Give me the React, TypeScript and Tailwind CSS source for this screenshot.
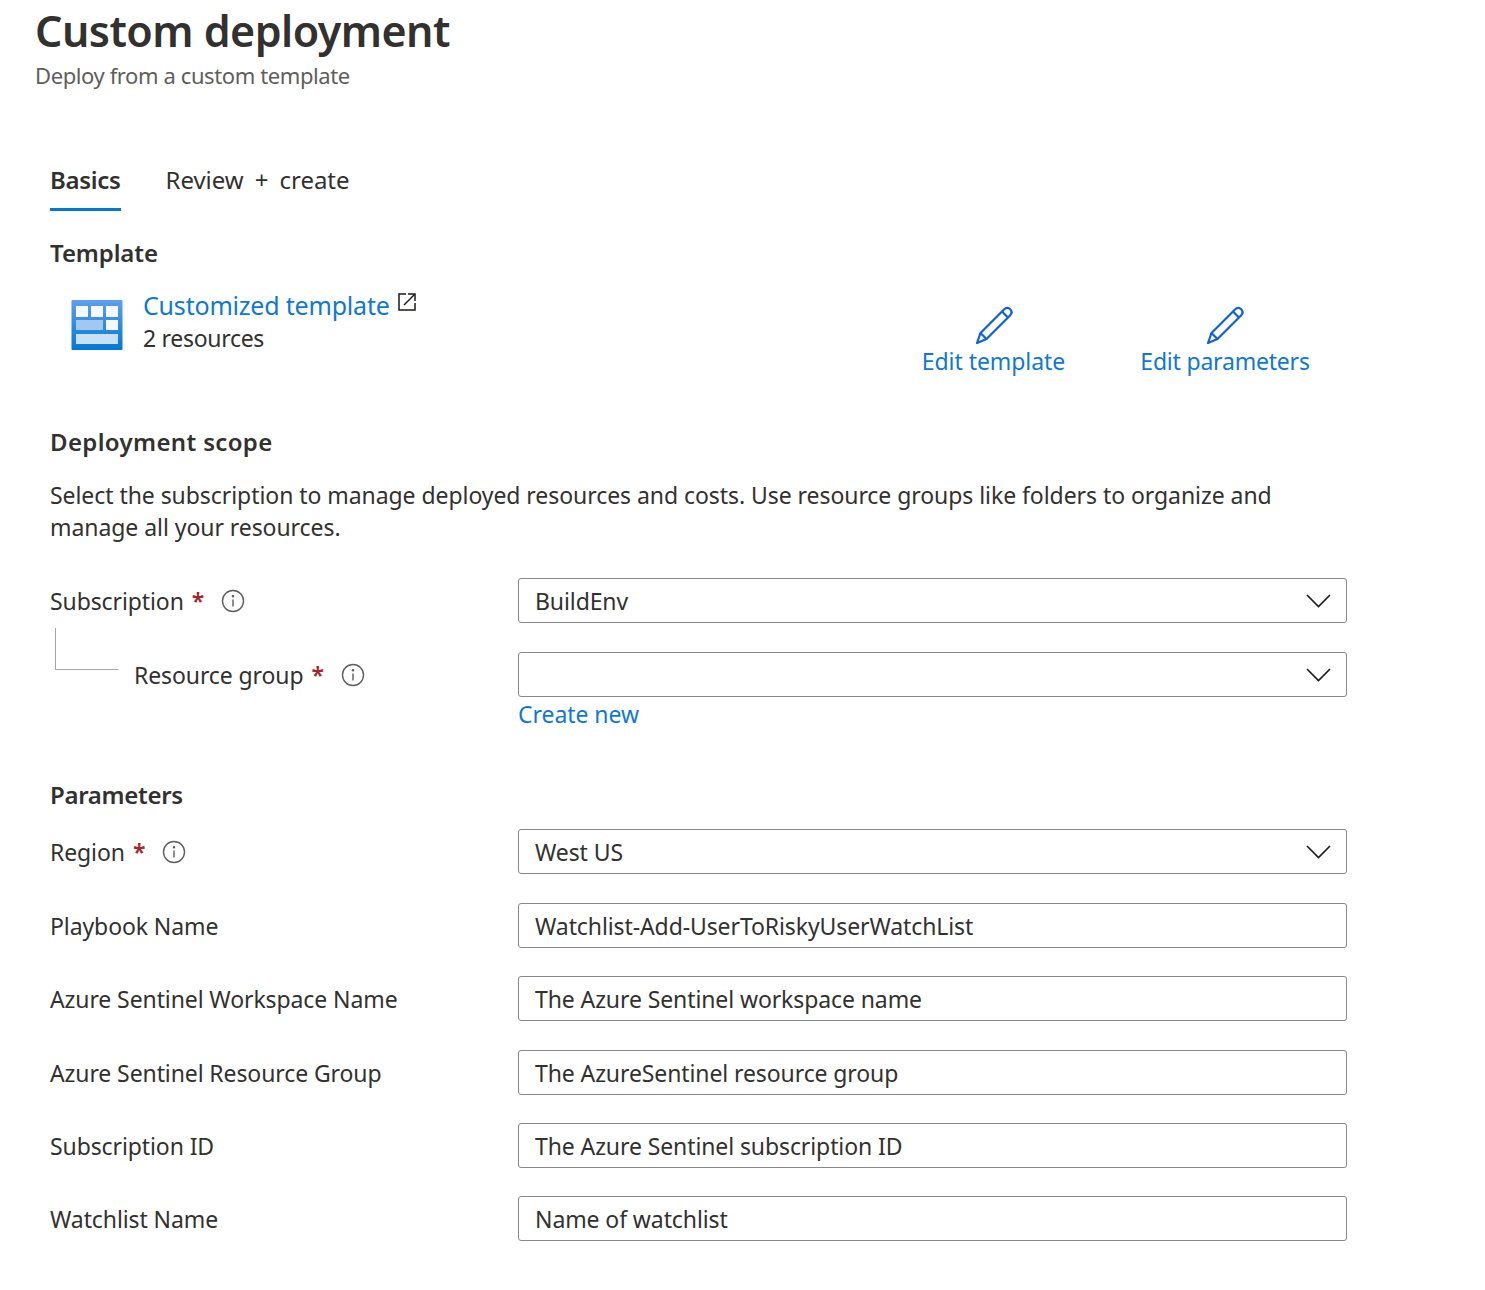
import React from 'react';

const InfoIcon = () => (
    <svg width="24" height="24" viewBox="0 0 24 24" fill="none" stroke="#605e5c" strokeWidth="1.4">
        <circle cx="12" cy="12" r="10.5" />
        <path d="M12 10.5v7" />
        <circle cx="12" cy="7.2" r="0.6" fill="#605e5c" />
    </svg>
);

const PencilIcon = () => (
    <svg width="38" height="38" viewBox="0 0 38 38" fill="none" stroke="#0f62d6" strokeWidth="2.2" strokeLinejoin="round">
        <path d="M2 37 L5.5 27 L29 3.5 C31 1.5 33.5 1.5 35.2 3.2 C37 5 37 7.5 35 9.5 L11.5 33 Z" />
        <path d="M5.5 27 L11.5 33" />
        <path d="M27 5.5 L33 11.5" />
    </svg>
);

const TemplateIcon = () => (
    <svg width="52" height="50" viewBox="0 0 52 50">
        <defs>
            <linearGradient id="tpl" x1="0" y1="0" x2="0" y2="1">
                <stop offset="0" stopColor="#5ea0ef" />
                <stop offset="1" stopColor="#0078d4" />
            </linearGradient>
        </defs>
        <rect x="0.5" y="0" width="51" height="50" rx="1" fill="url(#tpl)" />
        <rect x="5" y="6" width="12" height="11" fill="#f5f9ff" />
        <rect x="20" y="6" width="12" height="11" fill="#f5f9ff" />
        <rect x="35" y="6" width="12" height="11" fill="#f5f9ff" />
        <rect x="5" y="20" width="27" height="10" fill="#a3c8f0" />
        <rect x="35" y="20" width="12" height="10" fill="#f5f9ff" />
        <rect x="5" y="34" width="42" height="10" fill="#c6e0f6" />
    </svg>
);

const ExternalIcon = () => (
    <svg width="18" height="18" viewBox="0 0 18 18" fill="none" stroke="#1b1a19" strokeWidth="1.5">
        <path d="M8 1H1v16h16v-7" />
        <path d="M6 12 L16.5 1.5" />
        <path d="M10 1h7v7" />
    </svg>
);

const Chevron = () => (
    <svg width="25" height="14" viewBox="0 0 25 14" fill="none" stroke="#1b1a19" strokeWidth="1.6">
        <path d="M1 1 L12.5 12.5 L24 1" />
    </svg>
);

const Required = () => <span className="ml-2 text-[#a4262c] font-semibold">*</span>;

const Box = ({ value, select }: { value?: string; select?: boolean }) => (
    <div className="w-[829px] h-[45px] flex items-center justify-between pl-[16px] pr-[15px] border border-[#8a8886] rounded-[3px] text-[#323130]">
        <span className="tracking-[-0.1px]">{value}</span>
        {select && <Chevron />}
    </div>
);

const Row = ({ label, value, select, required, info, mt }: {
    label: string;
    value?: string;
    select?: boolean;
    required?: boolean;
    info?: boolean;
    mt: string;
}) => (
    <div className={`flex items-center ${mt}`}>
        <div className="w-[468px] flex items-center text-[#323130] tracking-[-0.1px]">
            {label}
            {required && <Required />}
            {info && <span className="ml-[17px] flex"><InfoIcon /></span>}
        </div>
        <Box value={value} select={select} />
    </div>
);

const App = () => {
    return (
        <div className='font-["Noto_Sans",sans-serif] w-[1485px] h-[1290px] bg-white overflow-hidden text-[23px] leading-[32px] tracking-[-0.05px] text-[#323130]'>
            <div className="pl-[35px] pt-[3px]">
                <h1 className="text-[43px] leading-[56px] font-semibold tracking-[-0.55px]">Custom deployment</h1>
                <p className="text-[22px] leading-[32px] tracking-[-0.4px] text-[#605e5c]">Deploy from a custom template</p>
            </div>

            <div className="pl-[50px]">
                <div className="flex gap-[45px] mt-[73px] text-[24px]">
                    <div className="h-[47px] border-b-[3px] border-[#0078d4] font-semibold tracking-[-0.3px]">Basics</div>
                    <div className="[word-spacing:5px]">Review + create</div>
                </div>

                <h2 className="mt-[26px] font-semibold text-[24px] tracking-[-0.1px]">Template</h2>
                <div className="flex mt-[19px]">
                    <div className="ml-[21px] mt-[12px]"><TemplateIcon /></div>
                    <div className="ml-[20px] w-[779px]">
                        <div className="flex items-start text-[#0f78d4] h-[34px]">
                            <span className="text-[25px] leading-[34px] tracking-[-0.2px]">Customized template</span>
                            <span className="ml-2 mt-[5px]"><ExternalIcon /></span>
                        </div>
                        <div className="tracking-[-0.3px]">2 resources</div>
                    </div>
                    <div className="flex flex-col items-center text-[#0f78d4] mt-[18px] w-[143px] whitespace-nowrap">
                        <PencilIcon />
                        <span className="mt-[1px]">Edit template</span>
                    </div>
                    <div className="flex flex-col items-center text-[#0f78d4] mt-[18px] ml-[76px] w-[168px] whitespace-nowrap tracking-[-0.2px]">
                        <PencilIcon />
                        <span className="mt-[1px]">Edit parameters</span>
                    </div>
                </div>

                <h2 className="mt-[49px] font-semibold text-[24px] tracking-[0.35px]">Deployment scope</h2>
                <p className="mt-[21px] w-[1240px] tracking-[-0.06px]">
                    Select the subscription to manage deployed resources and costs. Use resource groups like folders to organize and manage all your resources.
                </p>

                <Row label="Subscription" value="BuildEnv" select required info mt="mt-[35px]" />
                <div className="relative flex items-center mt-[29px]">
                    <div className="absolute left-[5px] top-[-24px] w-[63px] h-[42px] border-l border-b border-[#a6a6a6]" />
                    <div className="w-[468px] pl-[84px] flex items-center tracking-[-0.1px]">
                        Resource group
                        <Required />
                        <span className="ml-[17px] flex"><InfoIcon /></span>
                    </div>
                    <Box select />
                </div>
                <div className="ml-[468px] mt-[1px] text-[#0f78d4]">Create new</div>

                <h2 className="mt-[49px] font-semibold text-[24px] tracking-[-0.3px]">Parameters</h2>
                <Row label="Region" value="West US" select required info mt="mt-[18px]" />
                <Row label="Playbook Name" value="Watchlist-Add-UserToRiskyUserWatchList" mt="mt-[29px]" />
                <Row label="Azure Sentinel Workspace Name" value="The Azure Sentinel workspace name" mt="mt-[28px]" />
                <Row label="Azure Sentinel Resource Group" value="The AzureSentinel resource group" mt="mt-[29px]" />
                <Row label="Subscription ID" value="The Azure Sentinel subscription ID" mt="mt-[28px]" />
                <Row label="Watchlist Name" value="Name of watchlist" mt="mt-[28px]" />
            </div>
        </div>
    );
};

export default App;
